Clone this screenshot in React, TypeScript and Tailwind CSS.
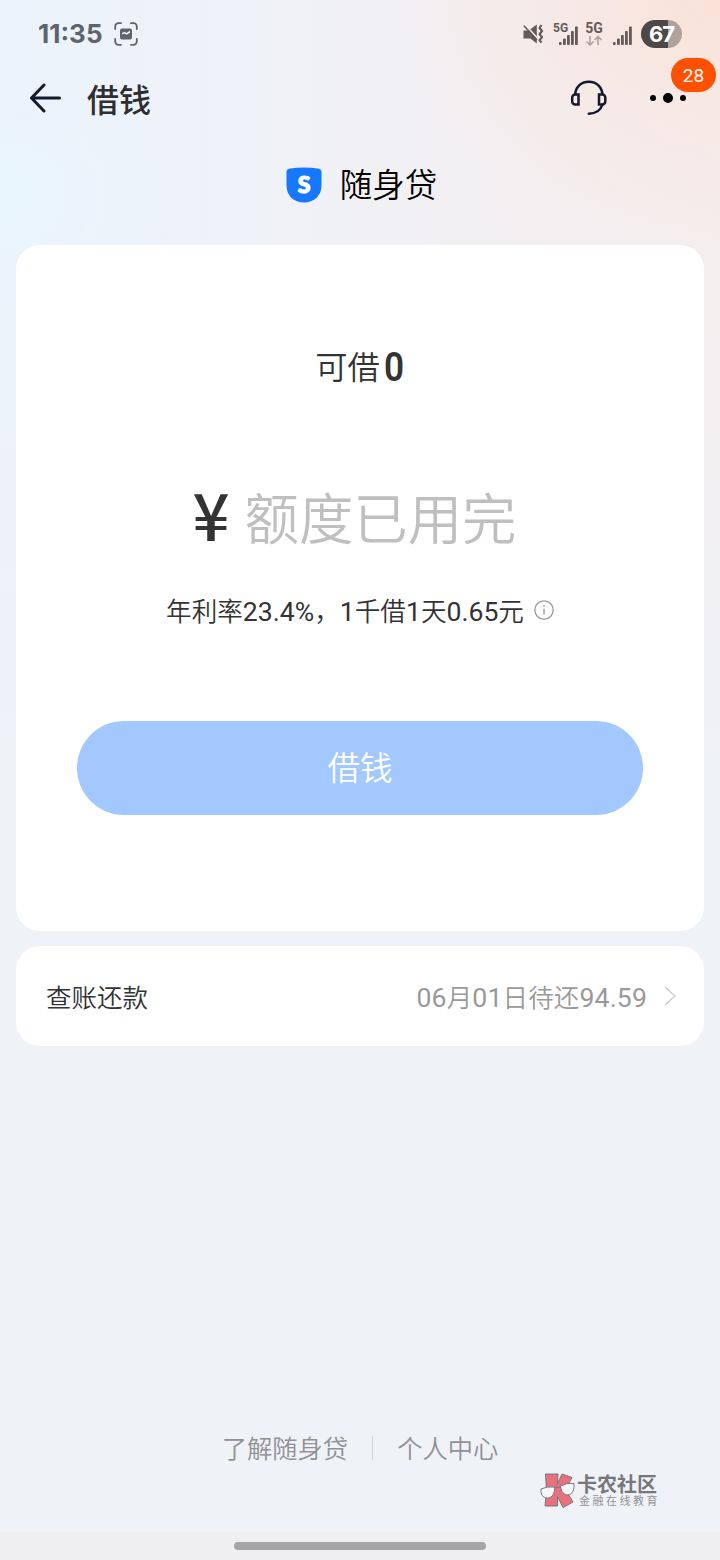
import { ReactNode } from 'react';

function SignalBars({ className }: { className?: string }) {
  return (
    <svg viewBox="0 0 20 20" className={className} fill="#645a57">
      <rect x="0" y="16" width="2.6" height="3" rx="0.8" />
      <rect x="4" y="12.5" width="2.8" height="6.5" rx="0.8" />
      <rect x="8" y="9" width="2.8" height="10" rx="0.8" />
      <rect x="12" y="5" width="2.8" height="14" rx="0.8" />
      <rect x="16" y="0.5" width="2.8" height="18.5" rx="0.8" />
    </svg>
  );
}

function ScreenshotIcon() {
  return (
    <svg viewBox="0 0 24 24" className="ml-3 h-6 w-6" fill="none">
      <path
        d="M1.2 7V4.5A3.3 3.3 0 0 1 4.5 1.2H7M17 1.2h2.5a3.3 3.3 0 0 1 3.3 3.3V7M22.8 17v2.5a3.3 3.3 0 0 1-3.3 3.3H17M7 22.8H4.5a3.3 3.3 0 0 1-3.3-3.3V17"
        stroke="#5f646c"
        strokeWidth="1.8"
        strokeLinecap="round"
      />
      <rect x="6" y="6.5" width="12" height="11" rx="2" fill="#5f646c" />
      <path d="M8 12.500v-1.500l2.500-1.200 1.700 1.200 3.800-2.300v2l-3.500 2-2-1.200z" fill="#eef3fb" />
    </svg>
  );
}

function MuteIcon() {
  return (
    <svg viewBox="0 0 22 22" className="h-[22px] w-[22px]" fill="none">
      <path d="M.5 7.5h5.3L13.800 1.5v19L7.5 15.5H.5z" fill="#645a57" />
      <path d="M2 1.500 16 17" stroke="#f5e9e7" strokeWidth="1.800" />
      <path d="M1.200 3 13.500 16.500" stroke="#645a57" strokeWidth="1.600" strokeLinecap="round" />
      <path
        d="M18.5 2l-2 3 2.6 3-2.6 3.1 2.6 3-2.6 3 2 2.6"
        stroke="#645a57"
        strokeWidth="2.2"
        strokeLinejoin="round"
      />
    </svg>
  );
}

function StatusBar() {
  return (
    <div className="flex h-[68px] items-center pl-[38px] pr-[38px]">
      <span className="w-[64px] whitespace-nowrap font-['Inter'] text-[26px] font-bold leading-none text-[#5f646c]">
        11:35
      </span>
      <ScreenshotIcon />
      <div className="ml-auto flex items-center text-[#645a57]">
        <MuteIcon />
        <div className="relative ml-2 h-6 w-[26px]">
          <span className="absolute left-0 top-0 font-['Roboto'] text-[12px] font-bold leading-none">5G</span>
          <SignalBars className="absolute left-[6px] top-[4px] h-[20px] w-[20px]" />
        </div>
        <div className="ml-[6px] flex h-6 w-[18px] flex-col items-center">
          <span className="font-['Roboto'] text-[14px] font-bold leading-[13px]">5G</span>
          <svg viewBox="0 0 18 11" className="h-[11px] w-[18px]" fill="none" stroke="#b3a5a1" strokeWidth="1.7">
            <path d="M5 1v9M1.5 6.5 5 10l3.5-3.5M13 10V1.5M9.5 5 13 1.5 16.5 5" />
          </svg>
        </div>
        <SignalBars className="ml-[10px] mt-1 h-[20px] w-[20px]" />
        <div className="ml-[8px] flex h-7 w-[41px] items-center justify-center rounded-full bg-linear-to-r from-[#4e4846] from-67% to-[#afa19e] to-67% font-['Inter'] text-[22px] font-bold tracking-[-1px] text-white">
          67
        </div>
      </div>
    </div>
  );
}

function NavBar() {
  return (
    <header className="flex h-[60px] items-center pl-[29px] pr-[34px]">
      <svg viewBox="0 0 34 30" className="h-[30px] w-[34px]" fill="none" stroke="#15192b" strokeWidth="3" strokeLinecap="round" strokeLinejoin="round">
        <path d="M15 2 2.5 15 15 28M3 15h27.5" />
      </svg>
      <h1 className="ml-6 pt-[5px] text-[32px] font-medium leading-none text-[#2e2e30]">借钱</h1>
      <svg viewBox="0 0 38 36" className="ml-auto h-9 w-[38px]" fill="none" stroke="#15192b" strokeWidth="2.5">
        <path d="M5.2 14.5C5.5 7 11 1.8 18.8 1.8S32 7 32.4 14.5" />
        <path d="M8.5 14.5v10H5.2a3 3 0 0 1-3-3v-4a3 3 0 0 1 3-3zM29 14.5v10h3.3a3 3 0 0 0 3-3v-4a3 3 0 0 0-3-3z" />
        <path d="M32.2 25c-1.5 5-6 8.5-13.4 8.7" strokeLinecap="round" />
      </svg>
      <div className="relative ml-[42px] flex items-center gap-[7px]">
        <span className="h-[6px] w-[6px] rounded-full bg-black" />
        <span className="h-[10px] w-[10px] rounded-full bg-black" />
        <span className="h-[6px] w-[6px] rounded-full bg-black" />
        <span className="absolute -top-[35px] left-[21px] flex h-[34px] w-[45px] items-center justify-center rounded-full bg-[#ff5000] text-[19px] leading-none text-white">
          28
        </span>
      </div>
    </header>
  );
}

function Brand() {
  return (
    <div className="flex h-[117px] items-center justify-center pb-[3px] pl-[3px]">
      <svg viewBox="0 0 36 36" className="h-9 w-9">
        <path d="M.5 4.5Q.5 2.2 3 1.8 18-.8 33 1.8q2.5.4 2.5 2.7V18C35.5 29 28 35.5 18 35.5S.5 29 .5 18z" fill="#1677ff" />
        <text x="18" y="25.8" textAnchor="middle" fontFamily="Lato" fontWeight="900" fontSize="23" fill="#fff" stroke="#fff" strokeWidth="1.2">
          S
        </text>
      </svg>
      <span className="ml-[18px] pt-[2px] text-[32.5px] font-[350] leading-none text-black">随身贷</span>
    </div>
  );
}

function Card({ className, children }: { className: string; children: ReactNode }) {
  return <section className={`mx-4 rounded-3xl bg-white ${className}`}>{children}</section>;
}

// Latin digits sit slightly larger and heavier than the Chinese text around them
function Num({ children }: { children: ReactNode }) {
  return <span className="text-[26.6px] font-[380]">{children}</span>;
}

function QuotaCard() {
  return (
    <Card className="flex h-[686px] flex-col items-center">
      <div className="mt-[98px] flex h-[50px] items-center pl-[2px] text-[32.3px] font-[350] leading-none text-[#333]">
        可借
        <span className="ml-[4px] inline-block origin-left scale-x-[0.88] text-[40px] font-semibold">0</span>
      </div>
      <div className="mt-[92px] flex h-[70px] items-center pr-[9px] leading-none">
        <span className="-ml-[2px] w-[36px] pb-[14px] font-['Noto_Sans_CJK_SC'] text-[65px] font-medium text-[#333]">¥</span>
        <span className="ml-4 pt-[2px] text-[54.4px] font-[350] text-[#bfbfbf]">额度已用完</span>
      </div>
      <div className="mt-[35px] flex h-10 items-center text-[25.6px] font-[350] leading-none text-[#333]">
        <span className="pt-[4px]">
          年利率<Num>23.4%</Num>，<Num>1</Num>千借<Num>1</Num>天<Num>0.65</Num>元
        </span>
        <svg viewBox="0 0 20 20" className="ml-[10px] h-5 w-5" fill="none" stroke="#999" strokeWidth="1.3">
          <circle cx="10" cy="10" r="9.2" />
          <path d="M10 8.5v6M10 5v1.8" />
        </svg>
      </div>
      <button className="mt-[91px] h-[94px] w-[566px] rounded-full bg-[#a2c8ff] pt-[3px] text-[32.5px] font-[350] leading-none text-white">
        借钱
      </button>
    </Card>
  );
}

function BillRow() {
  return (
    <Card className="mt-[15px] flex h-[100px] items-center pl-[30px] pr-7 text-[25.5px] font-[350] leading-none">
      <span className="pt-[5px] text-[#333]">查账还款</span>
      <span className="ml-auto pt-[5px] tracking-[0.15px] text-[#999]">
        <Num>06</Num>月<Num>01</Num>日待还<Num>94.59</Num>
      </span>
      <svg viewBox="0 0 12 20" className="ml-[17px] h-5 w-3" fill="none" stroke="#ccc" strokeWidth="1.5">
        <path d="M1 1l10 9-10 9" />
      </svg>
    </Card>
  );
}

function Watermark() {
  return (
    <div className="absolute left-[540px] top-[1471px] flex">
      <svg viewBox="0 0 36 38" className="h-[38px] w-9" stroke="#77777b" strokeWidth="1" strokeLinejoin="round">
        <path d="M5.5 3H18l-.8 10L22 3l10 3.5-6.5 12L33 31l-10 5.5-5.5-11V35H5l1.5-15z" fill="#e9717b" />
        <path d="M1 18q6-3 13.5-2c.5 6-2 11-7 11s-7-4-6.5-9zM20.5 15q6-3.5 13.5-2.5c.5 6-1.5 11-6 11.5-4 0-7-3-7.5-9z" fill="#f6f7fa" />
        <path d="M14.5 17l6-1" />
      </svg>
      <div className="ml-px mt-[4px] flex flex-col whitespace-nowrap leading-none">
        <span className="text-[20px] font-bold text-[#77777b]">卡农社区</span>
        <span className="ml-[2px] mt-[1px] text-[11px] tracking-[2.5px] text-[#919297]">金融在线教育</span>
      </div>
    </div>
  );
}

export default function App() {
  return (
    <div className="relative flex h-[1560px] w-[720px] flex-col overflow-hidden bg-[#eff2f8] bg-[radial-gradient(ellipse_320px_240px_at_100%_0%,#f9e2d8_0%,#f8e5df90_50%,#f7e8e300_100%),radial-gradient(ellipse_200px_160px_at_0%_195px,#e9f6fe_0%,#eaf4fd80_50%,#eaf4fd00_100%),linear-gradient(to_bottom,#eff2f700_0%,#eff2f700_12%,#eff2f7_50%),linear-gradient(to_right,#ebf3fc,#f0f2f7_40%,#f2eff2_65%,#f5edec)] font-['Roboto','Noto_Sans_CJK_SC',sans-serif]">
      <StatusBar />
      <NavBar />
      <Brand />
      <QuotaCard />
      <BillRow />
      <footer className="mt-auto">
        <nav className="flex h-10 items-center justify-center text-[25.3px] font-[350] leading-none text-[#8f9196]">
          <span className="pt-[4px]">了解随身贷</span>
          <span className="mx-6 h-6 w-px bg-[#cfd1d6]" />
          <span className="pt-[4px]">个人中心</span>
        </nav>
        <div className="mt-[64px] flex h-7 items-center justify-center bg-[#efeff2]">
          <div className="h-2 w-[252px] rounded-full bg-[#a5a5a7]" />
        </div>
      </footer>
      <Watermark />
    </div>
  );
}
